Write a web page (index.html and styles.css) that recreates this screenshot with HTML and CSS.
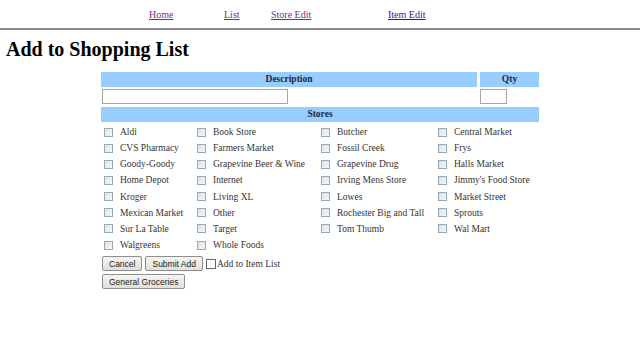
FILE: index.html
```html
<!DOCTYPE html>
<html lang="en">
  <head>
    <meta charset="UTF-8" />
    <title>Add to Shopping List</title>
    <link rel="stylesheet" href="styles.css">
  </head>
  <body>
    <div class="nav">
      <a href="#" class="visited">Home</a>
      <a href="#" class="visited">List</a>
      <a href="#" class="visited">Store Edit</a>
      <a href="#">Item Edit</a>
    </div>
    <hr class="rule">

    <h1>Add to Shopping List</h1>

    <form class="form">
      <div class="head-row">
        <div class="head">Description</div>
        <div class="head">Qty</div>
      </div>
      <div class="input-row">
        <input type="text" class="desc">
        <input type="text" class="qty">
      </div>
      <div class="head stores-head">Stores</div>

      <div class="stores">
        <label class="store"><input type="checkbox" class="box">Aldi</label>
        <label class="store"><input type="checkbox" class="box">Book Store</label>
        <label class="store"><input type="checkbox" class="box">Butcher</label>
        <label class="store"><input type="checkbox" class="box">Central Market</label>

        <label class="store"><input type="checkbox" class="box">CVS Pharmacy</label>
        <label class="store"><input type="checkbox" class="box">Farmers Market</label>
        <label class="store"><input type="checkbox" class="box">Fossil Creek</label>
        <label class="store"><input type="checkbox" class="box">Frys</label>

        <label class="store"><input type="checkbox" class="box">Goody-Goody</label>
        <label class="store"><input type="checkbox" class="box">Grapevine Beer &amp; Wine</label>
        <label class="store"><input type="checkbox" class="box">Grapevine Drug</label>
        <label class="store"><input type="checkbox" class="box">Halls Market</label>

        <label class="store"><input type="checkbox" class="box">Home Depot</label>
        <label class="store"><input type="checkbox" class="box">Internet</label>
        <label class="store"><input type="checkbox" class="box">Irving Mens Store</label>
        <label class="store"><input type="checkbox" class="box">Jimmy's Food Store</label>

        <label class="store"><input type="checkbox" class="box">Kroger</label>
        <label class="store"><input type="checkbox" class="box">Living XL</label>
        <label class="store"><input type="checkbox" class="box">Lowes</label>
        <label class="store"><input type="checkbox" class="box">Market Street</label>

        <label class="store"><input type="checkbox" class="box">Mexican Market</label>
        <label class="store"><input type="checkbox" class="box">Other</label>
        <label class="store"><input type="checkbox" class="box">Rochester Big and Tall</label>
        <label class="store"><input type="checkbox" class="box">Sprouts</label>

        <label class="store"><input type="checkbox" class="box">Sur La Table</label>
        <label class="store"><input type="checkbox" class="box">Target</label>
        <label class="store"><input type="checkbox" class="box">Tom Thumb</label>
        <label class="store"><input type="checkbox" class="box">Wal Mart</label>

        <label class="store"><input type="checkbox" class="box">Walgreens</label>
        <label class="store"><input type="checkbox" class="box">Whole Foods</label>
      </div>

      <div class="actions">
        <button type="button" class="btn">Cancel</button>
        <button type="button" class="btn">Submit Add</button>
        <label class="add-item"><input type="checkbox" class="box plain">Add to Item List</label>
      </div>
      <div class="actions">
        <button type="button" class="btn">General Groceries</button>
      </div>
    </form>
  </body>
</html>
```

FILE: styles.css
```css
body {
  font-family: "Liberation Serif", "Times New Roman", serif;
  margin: 0;
  padding: 0;
  background-color: #fff;
  color: #222;
}
.nav {
  display: grid;
  grid-template-columns: 75px 47px 117px auto;
  padding: 9px 0 0 149px;
  height: 19px;
  box-sizing: border-box;
  font-size: 10px;
}
.nav a {
  color: #1a1aa6;
}
.nav a.visited {
  color: #7a2a8a;
}
.rule {
  margin: 0;
  border: none;
  border-top: 2px solid #8c8c8c;
  margin-top: 9px;
}
h1 {
  font-size: 20px;
  margin: 8px 0 0 6px;
  color: #000;
  line-height: 23px;
}
.form {
  width: 438px;
  margin: 11px 0 0 101px;
  font-size: 9.5px;
}
.head-row {
  display: grid;
  grid-template-columns: 376px 59px;
  gap: 3px;
}
.head {
  background-color: #99ccff;
  font-weight: bold;
  text-align: center;
  height: 15px;
  line-height: 15px;
  color: #1d2740;
}
.input-row {
  display: flex;
  justify-content: space-between;
  padding: 2px 32px 3px 1px;
  height: 20px;
  box-sizing: border-box;
}
.desc,
.qty {
  height: 15px;
  box-sizing: border-box;
  border: 1px solid #a5a5a5;
  padding: 0;
  margin: 0;
}
.desc {
  width: 186px;
}
.qty {
  width: 27px;
}
.stores-head {
  width: 438px;
}
.stores {
  display: grid;
  grid-template-columns: 93px 124px 117px auto;
  grid-auto-rows: 16.15px;
  padding: 2px 0 0 3px;
}
.store {
  display: flex;
  align-items: center;
  color: #333;
}
.box {
  appearance: none;
  width: 9px;
  height: 9px;
  margin: 0 7px 0 0;
  border: 1px solid #9aa8b4;
  background: linear-gradient(135deg, #dfe3e6, #f6f7f8);
  box-sizing: border-box;
}
.box.plain {
  width: 10px;
  height: 10px;
  margin: 0 1px 0 0;
  border-color: #666;
  background: #fff;
}
.actions {
  display: flex;
  align-items: center;
  gap: 3px;
  margin: 3px 0 0 1px;
}
.btn {
  font-family: "Liberation Sans", Arial, sans-serif;
  font-size: 8.5px;
  height: 15px;
  padding: 0 6px;
  background: linear-gradient(#f6f5f0, #e2e0d8);
  border: 1px solid #8e8e8e;
  border-radius: 2px;
  color: #222;
}
.add-item {
  display: flex;
  align-items: center;
  color: #333;
}
```
